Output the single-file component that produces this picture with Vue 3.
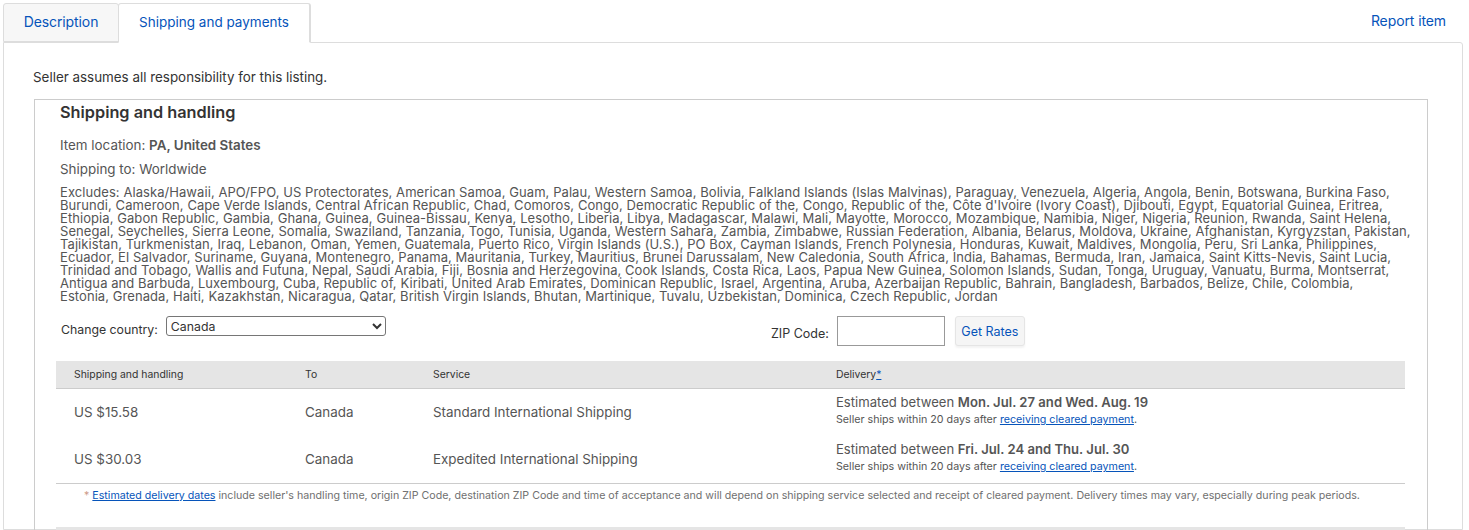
<script setup>
const excludes = [
  'Excludes: Alaska/Hawaii, APO/FPO, US Protectorates, American Samoa, Guam, Palau, Western Samoa, Bolivia, Falkland Islands (Islas Malvinas), Paraguay, Venezuela, Algeria, Angola, Benin, Botswana, Burkina Faso,',
  'Burundi, Cameroon, Cape Verde Islands, Central African Republic, Chad, Comoros, Congo, Democratic Republic of the, Congo, Republic of the, Côte d\'Ivoire (Ivory Coast), Djibouti, Egypt, Equatorial Guinea, Eritrea,',
  'Ethiopia, Gabon Republic, Gambia, Ghana, Guinea, Guinea-Bissau, Kenya, Lesotho, Liberia, Libya, Madagascar, Malawi, Mali, Mayotte, Morocco, Mozambique, Namibia, Niger, Nigeria, Reunion, Rwanda, Saint Helena,',
  'Senegal, Seychelles, Sierra Leone, Somalia, Swaziland, Tanzania, Togo, Tunisia, Uganda, Western Sahara, Zambia, Zimbabwe, Russian Federation, Albania, Belarus, Moldova, Ukraine, Afghanistan, Kyrgyzstan, Pakistan,',
  'Tajikistan, Turkmenistan, Iraq, Lebanon, Oman, Yemen, Guatemala, Puerto Rico, Virgin Islands (U.S.), PO Box, Cayman Islands, French Polynesia, Honduras, Kuwait, Maldives, Mongolia, Peru, Sri Lanka, Philippines,',
  'Ecuador, El Salvador, Suriname, Guyana, Montenegro, Panama, Mauritania, Turkey, Mauritius, Brunei Darussalam, New Caledonia, South Africa, India, Bahamas, Bermuda, Iran, Jamaica, Saint Kitts-Nevis, Saint Lucia,',
  'Trinidad and Tobago, Wallis and Futuna, Nepal, Saudi Arabia, Fiji, Bosnia and Herzegovina, Cook Islands, Costa Rica, Laos, Papua New Guinea, Solomon Islands, Sudan, Tonga, Uruguay, Vanuatu, Burma, Montserrat,',
  'Antigua and Barbuda, Luxembourg, Cuba, Republic of, Kiribati, United Arab Emirates, Dominican Republic, Israel, Argentina, Aruba, Azerbaijan Republic, Bahrain, Bangladesh, Barbados, Belize, Chile, Colombia,',
  'Estonia, Grenada, Haiti, Kazakhstan, Nicaragua, Qatar, British Virgin Islands, Bhutan, Martinique, Tuvalu, Uzbekistan, Dominica, Czech Republic, Jordan'
].join('\n')
const rows = [
  { cost: 'US $15.58', to: 'Canada', service: 'Standard International Shipping', dates: 'Mon. Jul. 27 and Wed. Aug. 19' },
  { cost: 'US $30.03', to: 'Canada', service: 'Expedited International Shipping', dates: 'Fri. Jul. 24 and Thu. Jul. 30' }
]
</script>

<template>
  <div class="page">
    <div class="tabbar">
      <div class="tabs">
        <a class="tab">Description</a>
        <a class="tab active">Shipping and payments</a>
      </div>
      <a class="report">Report item</a>
    </div>
    <div class="panel">
      <p class="assume">Seller assumes all responsibility for this listing.</p>
      <section class="box">
        <h2 class="title">Shipping and handling</h2>
        <p class="meta">Item location: <b>PA, United States</b></p>
        <p class="meta second">Shipping to: Worldwide</p>
        <div class="excludes">{{ excludes }}</div>
        <div class="controls">
          <div class="country">
            <label class="ctl-label">Change country:</label>
            <select class="select"><option>Canada</option></select>
          </div>
          <div class="zip">
            <label class="ctl-label">ZIP Code:</label>
            <input class="zip-input" />
            <button class="rates">Get Rates</button>
          </div>
        </div>
        <div class="table">
          <div class="row head">
            <div>Shipping and handling</div>
            <div>To</div>
            <div>Service</div>
            <div>Delivery<a class="star">*</a></div>
          </div>
          <div v-for="r in rows" :key="r.cost" class="row body">
            <div>{{ r.cost }}</div>
            <div>{{ r.to }}</div>
            <div>{{ r.service }}</div>
            <div class="delivery">
              <div class="est">Estimated between <b>{{ r.dates }}</b></div>
              <div class="ships">Seller ships within 20 days after <a>receiving cleared payment</a>.</div>
            </div>
          </div>
        </div>
        <p class="note"><span class="asterisk">*</span> <a>Estimated delivery dates</a> include seller's handling time, origin ZIP Code, destination ZIP Code and time of acceptance and will depend on shipping service selected and receipt of cleared payment. Delivery times may vary, especially during peak periods.</p>
        <div class="next"></div>
      </section>
    </div>
  </div>
</template>

<style>
html, body { margin: 0; background: #fff; overflow: hidden; }
</style>

<style scoped>
.page {
  height: 530px;
  overflow: hidden;
  font-family: Inter, "Open Sans", sans-serif;
  color: #333;
  font-size: 13px;
  box-sizing: border-box;
  padding: 0 6px 0 3px;
}
.tabbar { display: flex; justify-content: space-between; height: 42px; }
.tabs { display: flex; align-items: flex-end; }
.tab {
  box-sizing: border-box;
  height: 39px;
  padding-bottom: 3px;
  display: flex;
  align-items: center;
  justify-content: center;
  color: #0654ba;
  background: #f7f7f7;
  border: 1px solid #ddd;
  border-radius: 3px 3px 0 0;
  width: 116px;
  font-size: 14px;
  letter-spacing: -0.1px;
}
.tab.active {
  width: 193px;
  margin-left: -1px;
  background: #fff;
  height: 40px;
  font-size: 13.5px;
  letter-spacing: 0;
  padding-bottom: 2px;
  border-right: 2px solid #ddd;
  border-bottom-color: #fff;
  margin-bottom: -1px;
  position: relative;
}
.report { color: #0654ba; font-size: 14px; letter-spacing: -0.1px; margin: 13px 17px 0 0; line-height: 16px; height: 16px; }
.panel {
  box-sizing: border-box;
  height: 488px;
  border: 1px solid #ddd;
  border-radius: 0 3px 0 0;
  padding: 26px 34px 0 29px;
}
.assume { margin: 0; font-size: 13.4px; line-height: 17px; color: #333; }
.box {
  margin: 13px 0 0 1px;
  border: 1px solid #ccc;
  height: 500px;
  padding: 0 22px 0 21px;
  box-sizing: border-box;
}
.title { margin: 3px 0 0 4px; font-size: 16.3px; line-height: 19px; font-weight: 600; color: #333; }
.meta { margin: 14px 0 0 4px; line-height: 18px; color: #555; font-size: 13.4px; }
.meta b { font-weight: 600; }
.meta.second { margin-top: 6px; }
.excludes { margin: 8px 0 0 4px; font-size: 13px; letter-spacing: 0.07px; line-height: 13px; color: #555; white-space: pre; }
.controls { display: flex; margin: 13px 0 0 5px; height: 45px; }
.country { display: flex; align-items: flex-start; width: 710px; }
.country .ctl-label { margin-top: 6px; margin-right: 8px; }
.ctl-label { font-size: 12.3px; line-height: 15px; color: #333; }
.select {
  width: 220px;
  height: 20px;
  font: 12.3px Inter, sans-serif;
  color: #333;
  background: #fff;
  border: 1px solid #767676;
  border-radius: 3px;
}
.zip { display: flex; align-items: flex-start; }
.zip .ctl-label { margin-top: 10px; margin-right: 8px; font-size: 12.5px; }
.zip-input {
  box-sizing: border-box;
  width: 108px;
  height: 30px;
  border: 1px solid #999;
  margin-right: 10px;
  padding: 0;
}
.rates {
  box-sizing: border-box;
  width: 70px;
  height: 30px;
  border: 1px solid #e5e5e5;
  border-radius: 3px;
  background: #f5f5f5;
  color: #0654ba;
  font: 12.5px Inter, sans-serif;
  box-shadow: 0 2px 2px rgba(0,0,0,.05);
  padding: 1px 0 0;
}
.row { display: grid; grid-template-columns: 231px 128px 403px 1fr; padding-left: 18px; }
.head {
  height: 28px;
  align-items: center;
  background: #e5e5e5;
  border-bottom: 1px solid #ccc;
  box-sizing: border-box;
  font-size: 10.4px;
  color: #333;
}
.star { color: #0654ba; text-decoration: underline; }
.body { height: 47px; padding-bottom: 2px; box-sizing: border-box; align-items: center; color: #555; font-size: 13.4px; }
.delivery { padding-bottom: 3px; }
.est { font-size: 13.1px; line-height: 18px; color: #555; }
.est b { font-weight: 600; }
.ships { font-size: 10.7px; line-height: 14px; color: #555; margin-top: 2px; }
.ships a, .note a { color: #0654ba; text-decoration: underline; }
.note {
  margin: 0;
  border-top: 1px solid #ccc;
  padding: 5px 0 0 28px;
  font-size: 10.65px;
  line-height: 14px;
  color: #707070;
  white-space: nowrap;
}
.asterisk { color: #c98; }
.next { height: 6px; background: #e5e5e5; margin-top: 24px; }
</style>
